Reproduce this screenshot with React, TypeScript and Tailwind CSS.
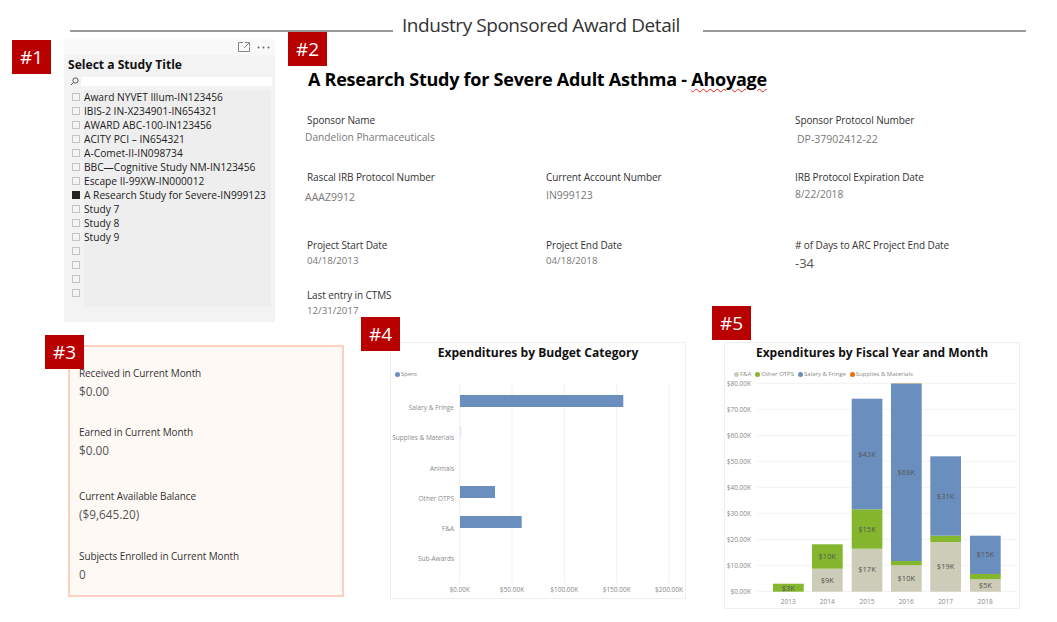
const sans = '"Open Sans", "Noto Sans", sans-serif'

const studies = [
  'Award NYVET Illum-IN123456',
  'IBIS-2 IN-X234901-IN654321',
  'AWARD ABC-100-IN123456',
  'ACITY PCI – IN654321',
  'A-Comet-II-IN098734',
  'BBC—Cognitive Study NM-IN123456',
  'Escape II-99XW-IN000012',
  'A Research Study for Severe-IN999123',
  'Study 7',
  'Study 8',
  'Study 9',
  '',
  '',
  '',
  '',
]

const TAN = '#ccccb8'
const GREEN = '#84b72e'
const BLUE = '#6a8fbe'

// all bars in page pixels, y top -> y bottom
const years = [
  { year: '2013', x: 773, parts: [{ c: GREEN, y1: 583.7, y2: 591.7, l: '$3K', ly: 588 }] },
  {
    year: '2014',
    x: 812,
    parts: [
      { c: TAN, y1: 568.7, y2: 591.7, l: '$9K', ly: 580.3 },
      { c: GREEN, y1: 544.3, y2: 568.7, l: '$10K', ly: 556.3 },
    ],
  },
  {
    year: '2015',
    x: 851.7,
    parts: [
      { c: TAN, y1: 548.7, y2: 591.7, l: '$17K', ly: 569.7 },
      { c: GREEN, y1: 509.3, y2: 548.7, l: '$15K', ly: 529 },
      { c: BLUE, y1: 398.7, y2: 509.3, l: '$43K', ly: 454 },
    ],
  },
  {
    year: '2016',
    x: 891,
    parts: [
      { c: TAN, y1: 565.3, y2: 591.7, l: '$10K', ly: 578.3 },
      { c: GREEN, y1: 561, y2: 565.3, l: '', ly: 0 },
      { c: BLUE, y1: 384, y2: 561, l: '$68K', ly: 472 },
      { c: '#a89a80', y1: 383.3, y2: 384, l: '', ly: 0 },
    ],
  },
  {
    year: '2017',
    x: 930.3,
    parts: [
      { c: TAN, y1: 542, y2: 591.7, l: '$19K', ly: 566.3 },
      { c: GREEN, y1: 535.7, y2: 542, l: '', ly: 0 },
      { c: BLUE, y1: 456.3, y2: 535.7, l: '$31K', ly: 496 },
    ],
  },
  {
    year: '2018',
    x: 970,
    parts: [
      { c: TAN, y1: 579.3, y2: 591.7, l: '$5K', ly: 585.7 },
      { c: GREEN, y1: 574, y2: 579.3, l: '', ly: 0 },
      { c: BLUE, y1: 535.7, y2: 574, l: '$15K', ly: 554.3 },
    ],
  },
]

const yTicks = ['$80.00K', '$70.00K', '$60.00K', '$50.00K', '$40.00K', '$30.00K', '$20.00K', '$10.00K', '$0.00K']

const categories = [
  { name: 'Salary & Fringe', y: 407 },
  { name: 'Supplies & Materials', y: 437 },
  { name: 'Animals', y: 468 },
  { name: 'Other OTPS', y: 498 },
  { name: 'F&A', y: 528 },
  { name: 'Sub-Awards', y: 558 },
]

function Badge({ text, className }: { text: string; className: string }) {
  return (
    <div className={`absolute flex h-[34px] w-[39px] items-center justify-center bg-[#b80000] text-[19px] text-white ${className}`}>
      {text}
    </div>
  )
}

function Field({ label, value, valueClass }: { label: string; value: string; valueClass: string }) {
  return (
    <div>
      <div className="text-[10px] leading-[14px] tracking-[-0.1px] text-[#333]">{label}</div>
      <div className={`leading-[14px] text-[#777] ${valueClass}`}>{value}</div>
    </div>
  )
}

function Stat({ label, value, className }: { label: string; value: string; className: string }) {
  return (
    <div className={className}>
      <div className="text-[10px] leading-[14px] tracking-[-0.1px] text-[#333]">{label}</div>
      <div className="mt-[3px] text-[11.8px] leading-[16px] text-[#555]">{value}</div>
    </div>
  )
}

function Slicer() {
  return (
    <div className="h-[283px] w-[211px] shrink-0 bg-[#f3f3f3]">
      <div className="flex h-[16px] items-center justify-end gap-[7px] bg-[#f9f9f9] pr-[5px]">
        <svg width="12" height="10" viewBox="0 0 12 10" fill="none" stroke="#888" strokeWidth="1">
          <path d="M5 .5H.5v9h11V5M7 .5h4.5V4M11 1 6 6" />
        </svg>
        <svg width="13" height="3" viewBox="0 0 13 3" fill="#666">
          <circle cx="1.5" cy="1.5" r="1" />
          <circle cx="6.5" cy="1.5" r="1" />
          <circle cx="11.5" cy="1.5" r="1" />
        </svg>
      </div>
      <div className="pl-[4px] pt-[1px] text-[12.1px] font-bold leading-[18px] text-[#111]">Select a Study Title</div>
      <div className="mt-[3px] flex h-[9px] items-center pl-[6px] pr-[3px]">
        <svg width="9" height="9" viewBox="0 0 9 9" fill="none" stroke="#555" strokeWidth="1" className="shrink-0">
          <circle cx="5.5" cy="3.5" r="2.6" />
          <path d="M3.5 5.5 1 8" />
        </svg>
        <div className="ml-[2px] h-[9px] flex-1 bg-white" />
      </div>
      <div className="mt-[4px] flex flex-col">
        {studies.map((s, i) => (
          <div key={i} className="flex h-[14px] items-center">
            <div className={`ml-[8px] h-[8px] w-[8px] shrink-0 ${i === 7 ? 'bg-[#222]' : 'border border-[#c4c4c4] bg-[#f4f4f4]'}`} />
            <div className="ml-[4px] h-[14px] w-[187px] whitespace-nowrap bg-[#eeeeee] text-[10.2px] leading-[14px] text-[#222]">{s}</div>
          </div>
        ))}
        <div className="ml-[20px] h-[7px] w-[187px] bg-[#eeeeee]" />
      </div>
    </div>
  )
}

function Details() {
  return (
    <div className="ml-[32px] flex-1">
      <h1 className="ml-[1px] mt-[28px] h-[24px] whitespace-nowrap text-[18px] font-bold leading-[24px] tracking-[-0.25px] text-black">
        A Research Study for Severe Adult Asthma -{' '}
        <span className="underline decoration-[#d22] decoration-wavy decoration-1 underline-offset-2">Ahoyage</span>
      </h1>
      <div className="mt-[22px] grid grid-cols-[239px_249px_1fr] grid-rows-[57px_68px_50px_30px]">
        <Field label="Sponsor Name" value="Dandelion Pharmaceuticals" valueClass="ml-[-2px] mt-[3px] text-[10.2px]" />
        <div />
        <Field label="Sponsor Protocol Number" value="DP-37902412-22" valueClass="ml-[2px] mt-[5px] text-[10.5px]" />
        <Field label="Rascal IRB Protocol Number" value="AAAZ9912" valueClass="ml-[-2px] mt-[6px] text-[10.5px]" />
        <Field label="Current Account Number" value="IN999123" valueClass="mt-[4px] text-[10.5px]" />
        <Field label="IRB Protocol Expiration Date" value="8/22/2018" valueClass="mt-[3px] text-[10.2px]" />
        <Field label="Project Start Date" value="04/18/2013" valueClass="mt-[2px] text-[9.7px]" />
        <Field label="Project End Date" value="04/18/2018" valueClass="mt-[2px] text-[9.7px]" />
        <div>
          <div className="text-[10px] leading-[14px] tracking-[-0.1px] text-[#333]"># of Days to ARC Project End Date</div>
          <div className="mt-[2px] text-[13px] leading-[18px] text-[#555]">-34</div>
        </div>
        <Field label="Last entry in CTMS" value="12/31/2017" valueClass="mt-[2px] text-[9.7px]" />
      </div>
    </div>
  )
}

function BudgetChart() {
  const gridX = [459.7, 512, 564.3, 616.7, 669]
  const ticks = ['$0.00K', '$50.00K', '$100.00K', '$150.00K', '$200.00K']
  return (
    <div className="ml-[46px] h-[257px] w-[296px] shrink-0 border border-[#eeeeee]">
      <div className="mt-[2px] text-center text-[12.1px] font-bold leading-[16px] text-[#111]">Expenditures by Budget Category</div>
      <div className="mt-[9px] flex h-[8px] items-center pl-[4px]">
        <span className="h-[5px] w-[5px] rounded-full bg-[#6a8fbe]" />
        <span className="ml-[1px] text-[6px] text-[#888]">Spent</span>
      </div>
      <svg width="294" height="220" viewBox="391 378 294 220" className="block" fontFamily={sans}>
        {gridX.map((x) => (
          <line key={x} x1={x} x2={x} y1={383} y2={583} stroke="#f0f0f0" />
        ))}
        {ticks.map((t, i) => (
          <text key={t} x={gridX[i]} y={591.5} fontSize="6.5" fill="#888" textAnchor="middle">
            {t}
          </text>
        ))}
        {categories.map((c) => (
          <text key={c.name} x={454} y={c.y + 2.5} fontSize="6.5" fill="#8a8a8a" textAnchor="end">
            {c.name}
          </text>
        ))}
        <rect x={460} y={395} width={163.3} height={12} fill={BLUE} />
        <rect x={460} y={426} width={1.2} height={11} fill="#dde6f1" />
        <rect x={460} y={486} width={35} height={12} fill={BLUE} />
        <rect x={460} y={516} width={61.7} height={12} fill={BLUE} />
      </svg>
    </div>
  )
}

function FiscalChart() {
  const legend = [
    { name: 'F&A', c: TAN },
    { name: 'Other OTPS', c: GREEN },
    { name: 'Salary & Fringe', c: BLUE },
    { name: 'Supplies & Materials', c: '#e8710a' },
  ]
  return (
    <div className="ml-[38px] h-[267px] w-[296px] shrink-0 border border-[#eeeeee]">
      <div className="mt-[2px] text-center text-[12px] font-bold leading-[16px] text-[#111]">Expenditures by Fiscal Year and Month</div>
      <div className="mt-[9px] flex h-[8px] items-center gap-[4px] pl-[9px]">
        {legend.map((l) => (
          <div key={l.name} className="flex items-center gap-[1px]">
            <span className="h-[5px] w-[5px] rounded-full" style={{ backgroundColor: l.c }} />
            <span className="whitespace-nowrap text-[6px] text-[#888]">{l.name}</span>
          </div>
        ))}
      </div>
      <svg width="294" height="230" viewBox="725 378 294 230" className="block" fontFamily={sans}>
        {yTicks.map((t, i) => {
          const y = 383.3 + i * 26
          return (
            <g key={t}>
              <line x1={757} x2={1017} y1={y} y2={y} stroke="#f2f2f2" />
              <text x={751} y={y + 2.3} fontSize="6.5" fill="#888" textAnchor="end">
                {t}
              </text>
            </g>
          )
        })}
        {years.map((b) => (
          <g key={b.year}>
            {b.parts.map((p) => (
              <g key={p.c}>
                <rect x={b.x} y={p.y1} width={30.7} height={p.y2 - p.y1} fill={p.c} />
                {p.l && (
                  <text x={b.x + 15.3} y={p.ly + 2.7} fontSize="7.5" fill="#555" textAnchor="middle">
                    {p.l}
                  </text>
                )}
              </g>
            ))}
            <text x={b.x + 15.3} y={604} fontSize="6.5" fill="#888" textAnchor="middle">
              {b.year}
            </text>
          </g>
        ))}
      </svg>
    </div>
  )
}

export default function App() {
  return (
    <div className="relative h-[622px] w-[1057px] overflow-hidden bg-white" style={{ fontFamily: sans }}>
      <div className="flex h-[32px] items-end pl-[70px]">
        <div className="h-[2px] w-[323px] bg-[#999]" />
        <div className="mb-[-5px] ml-[9px] w-[278px] whitespace-nowrap text-[19px] leading-[24px] tracking-[-0.45px] text-[#333]">Industry Sponsored Award Detail</div>
        <div className="ml-[23px] h-[2px] w-[323px] bg-[#999]" />
      </div>

      <div className="mt-[7px] flex pl-[64px]">
        <Slicer />
        <Details />
      </div>

      <div className="mt-[20px] flex items-start pl-[68px]">
        <div className="mt-[3px] h-[252px] w-[276px] shrink-0 border-2 border-[#ffd0bf] bg-[#fff9f6] pl-[9px]">
          <Stat label="Received in Current Month" value="$0.00" className="mt-[19px]" />
          <Stat label="Earned in Current Month" value="$0.00" className="mt-[26px]" />
          <Stat label="Current Available Balance" value="($9,645.20)" className="mt-[31px]" />
          <Stat label="Subjects Enrolled in Current Month" value="0" className="mt-[27px]" />
        </div>
        <BudgetChart />
        <FiscalChart />
      </div>

      <Badge text="#1" className="left-[12px] top-[40px]" />
      <Badge text="#2" className="left-[288px] top-[32px]" />
      <Badge text="#3" className="left-[45px] top-[335px]" />
      <Badge text="#4" className="left-[361px] top-[317px]" />
      <Badge text="#5" className="left-[712px] top-[306px]" />
    </div>
  )
}
